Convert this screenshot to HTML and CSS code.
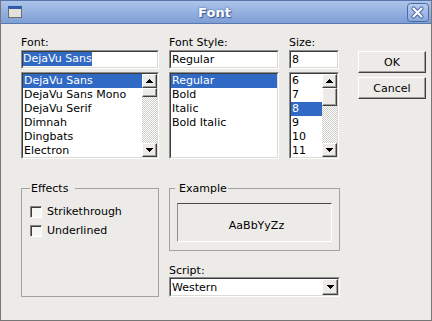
FILE: index.html
```html
<!DOCTYPE html>
<html>
<head>
  <title>Font</title>
  <meta charset="utf-8">
  <link rel="stylesheet" href="styles.css">
</head>
<body>
  <!-- dialog -->
  <div class="dialog">
    <div class="titlebar">
      <span class="win-icon"></span>
      <span class="title">Font</span>
      <svg class="close" width="22" height="19" viewBox="0 0 22 19">
        <defs>
          <linearGradient id="cg" x1="0" y1="0" x2="0" y2="1">
            <stop offset="0" stop-color="#b9cdee"/>
            <stop offset="1" stop-color="#88a8dc"/>
          </linearGradient>
        </defs>
        <rect x="0.5" y="0.5" width="21" height="18" rx="3" fill="url(#cg)" stroke="#4a68a6"/>
        <path d="M6.5 5.5l8 8M14.5 5.5l-8 8" stroke="#4a68a6" stroke-width="4.2" stroke-linecap="round"/>
        <path d="M6.5 5.5l8 8M14.5 5.5l-8 8" stroke="#fff" stroke-width="2.2" stroke-linecap="round"/>
      </svg>
    </div>

    <div class="content">
      <div class="top">
        <div class="col col-font">
          <div class="label">Font:</div>
          <div class="sunken entry"><div class="sunken-in"><span class="sel">DejaVu Sans</span></div></div>
          <div class="sunken list">
            <div class="sunken-in list-in">
              <ul class="items">
                <li class="selected">DejaVu Sans</li>
                <li>DejaVu Sans Mono</li>
                <li>DejaVu Serif</li>
                <li>Dimnah</li>
                <li>Dingbats</li>
                <li>Electron</li>
              </ul>
              <div class="scrollbar">
                <div class="raised sb-btn"><svg width="7" height="4"><path d="M3 0h1v1h1v1h1v1h1v1H0V3h1V2h1V1h1z"/></svg></div>
                <div class="raised sb-thumb"></div>
                <div class="sb-track"></div>
                <div class="raised sb-btn"><svg width="7" height="4"><path d="M0 0h7v1H6v1H5v1H4v1H3V3H2V2H1V1H0z"/></svg></div>
              </div>
            </div>
          </div>
        </div>

        <div class="col col-style">
          <div class="label">Font Style:</div>
          <div class="sunken entry"><div class="sunken-in"><span class="val">Regular</span></div></div>
          <div class="sunken list">
            <div class="sunken-in list-in">
              <ul class="items">
                <li class="selected">Regular</li>
                <li>Bold</li>
                <li>Italic</li>
                <li>Bold Italic</li>
              </ul>
            </div>
          </div>
        </div>

        <div class="col col-size">
          <div class="label">Size:</div>
          <div class="sunken entry"><div class="sunken-in"><span class="val">8</span></div></div>
          <div class="sunken list">
            <div class="sunken-in list-in">
              <ul class="items">
                <li>6</li>
                <li>7</li>
                <li class="selected">8</li>
                <li>9</li>
                <li>10</li>
                <li>11</li>
              </ul>
              <div class="scrollbar">
                <div class="raised sb-btn"><svg width="7" height="4"><path d="M3 0h1v1h1v1h1v1h1v1H0V3h1V2h1V1h1z"/></svg></div>
                <div class="raised sb-thumb size-thumb"></div>
                <div class="sb-track"></div>
                <div class="raised sb-btn"><svg width="7" height="4"><path d="M0 0h7v1H6v1H5v1H4v1H3V3H2V2H1V1H0z"/></svg></div>
              </div>
            </div>
          </div>
        </div>

        <div class="buttons">
          <button class="raised btn">OK</button>
          <button class="raised btn">Cancel</button>
        </div>
      </div>

      <div class="bottom">
        <fieldset class="group effects">
          <legend>Effects</legend>
          <label class="check"><span class="box"></span>Strikethrough</label>
          <label class="check"><span class="box"></span>Underlined</label>
        </fieldset>

        <div class="right">
          <fieldset class="group example">
            <legend>Example</legend>
            <div class="preview">AaBbYyZz</div>
          </fieldset>
          <div class="label script-label">Script:</div>
          <div class="sunken combo">
            <div class="sunken-in combo-in">
              <span class="combo-text">Western</span>
              <span class="raised combo-btn"><svg width="7" height="4"><path d="M0 0h7v1H6v1H5v1H4v1H3V3H2V2H1V1H0z"/></svg></span>
            </div>
          </div>
        </div>
      </div>
    </div>
  </div>
  <!-- end of dialog -->
</body>
</html>
```

FILE: styles.css
```css
* {
  box-sizing: border-box;
}
body {
  margin: 0;
  font-family: "DejaVu Sans", "Liberation Sans", sans-serif;
  font-size: 11px;
  color: #000;
}
.dialog {
  width: 432px;
  height: 321px;
  display: flex;
  flex-direction: column;
  border: 1px solid #767676;
  border-top-color: #5876ad;
  background-color: #edebe8;
}

/* title bar */
.titlebar {
  flex: none;
  height: 23px;
  display: flex;
  align-items: center;
  padding: 0 2px 0 7px;
  background: linear-gradient(#abc4e9, #7e9ed6);
  border-bottom: 1px solid #5a78b0;
}
.win-icon {
  width: 14px;
  height: 12px;
  border: 1px solid #6c6c6c;
  border-top: 3px solid #2f58a8;
  background-color: #e2e2da;
}
.title {
  flex: 1;
  text-align: center;
  font-size: 13px;
  font-weight: bold;
  color: #fff;
  text-shadow: 0 0 2px #3d5c96, 1px 1px 1px #3d5c96;
}
.close {
  display: block;
}

/* content */
.content {
  flex: 1;
  padding: 11px 0 0 20px;
}
.top {
  display: flex;
  align-items: flex-start;
}
.col-font {
  width: 138px;
}
.col-style {
  width: 110px;
  margin-left: 10px;
}
.col-size {
  width: 50px;
  margin-left: 10px;
}
.label {
  height: 15px;
  line-height: 15px;
}

/* sunken frames */
.sunken {
  border: 1px solid;
  border-color: #8e8e8e #fff #fff #8e8e8e;
}
.sunken-in {
  height: 100%;
  border: 1px solid;
  border-color: #3c3c3c #dcdad5 #dcdad5 #3c3c3c;
  background-color: #fff;
}
.raised {
  border: 1px solid;
  border-color: #fff #404040 #404040 #fff;
  box-shadow: inset -1px -1px 0 #9e9e9e;
  background-color: #edebe8;
}

.entry {
  height: 19px;
  line-height: 15px;
  white-space: nowrap;
  overflow: hidden;
}
.sel {
  display: inline-block;
  vertical-align: top;
  line-height: 14px;
  background-color: #316ac5;
  color: #fff;
}
.val {
  padding-left: 1px;
}

.list {
  height: 87px;
  margin-top: 3px;
}
.list-in {
  display: flex;
  overflow: hidden;
}
.items {
  flex: 1;
  margin: 0;
  padding: 0;
  list-style: none;
  overflow: hidden;
}
.items li {
  height: 14px;
  line-height: 14px;
  padding-left: 1px;
  white-space: nowrap;
}
.items li.selected {
  background-color: #316ac5;
  color: #fff;
}

.scrollbar {
  width: 15px;
  flex: none;
  display: flex;
  flex-direction: column;
}
.sb-btn {
  height: 14px;
  flex: none;
  display: flex;
  align-items: center;
  justify-content: center;
}
.sb-btn svg,
.combo-btn svg {
  display: block;
}
.sb-thumb {
  height: 9px;
  flex: none;
}
.size-thumb {
  height: 18px;
}
.sb-track {
  flex: 1;
  background: repeating-conic-gradient(#fff 0 25%, #cfcdc8 0 50%) 0 0 / 2px 2px;
}

.buttons {
  width: 68px;
  margin-left: 19px;
  padding-top: 16px;
  display: flex;
  flex-direction: column;
  gap: 4px;
}
.btn {
  height: 22px;
  padding: 0;
  font-family: inherit;
  font-size: 11px;
  color: #000;
}

/* bottom part */
.bottom {
  display: flex;
  align-items: flex-start;
  margin-top: 23px;
}
.group {
  margin: 0;
  padding: 0;
  min-width: 0;
  border: 1px solid #a2a2a2;
}
.group legend {
  line-height: 13px;
}
.effects {
  width: 138px;
  height: 115px;
  padding: 7px 0 0 8px;
}
.effects legend {
  margin-left: 0;
  padding: 0 7px 0 1px;
}
.check {
  display: flex;
  align-items: center;
  gap: 5px;
  height: 19px;
}
.box {
  width: 12px;
  height: 12px;
  border: 1px solid;
  border-color: #828282 #fff #fff #828282;
  box-shadow: inset 1px 1px 0 #3c3c3c;
  background-color: #f6f6f5;
}

.right {
  width: 171px;
  margin-left: 10px;
}
.example {
  height: 69px;
  padding: 0 7px;
}
.example legend {
  margin-left: -2px;
  padding: 0 1px 0 4px;
}
.preview {
  margin-top: 8px;
  height: 39px;
  padding: 6px 0 0 4px;
  line-height: 31px;
  text-align: center;
  border: 1px solid;
  border-color: #4a4a4a #fff #fff #8e8e8e;
}
.script-label {
  margin-top: 13px;
  height: 13px;
  line-height: 13px;
}
.combo {
  height: 20px;
}
.combo-in {
  display: flex;
  align-items: center;
}
.combo-text {
  flex: 1;
  padding-left: 1px;
}
.combo-btn {
  width: 16px;
  height: 16px;
  display: flex;
  align-items: center;
  justify-content: center;
}
```
